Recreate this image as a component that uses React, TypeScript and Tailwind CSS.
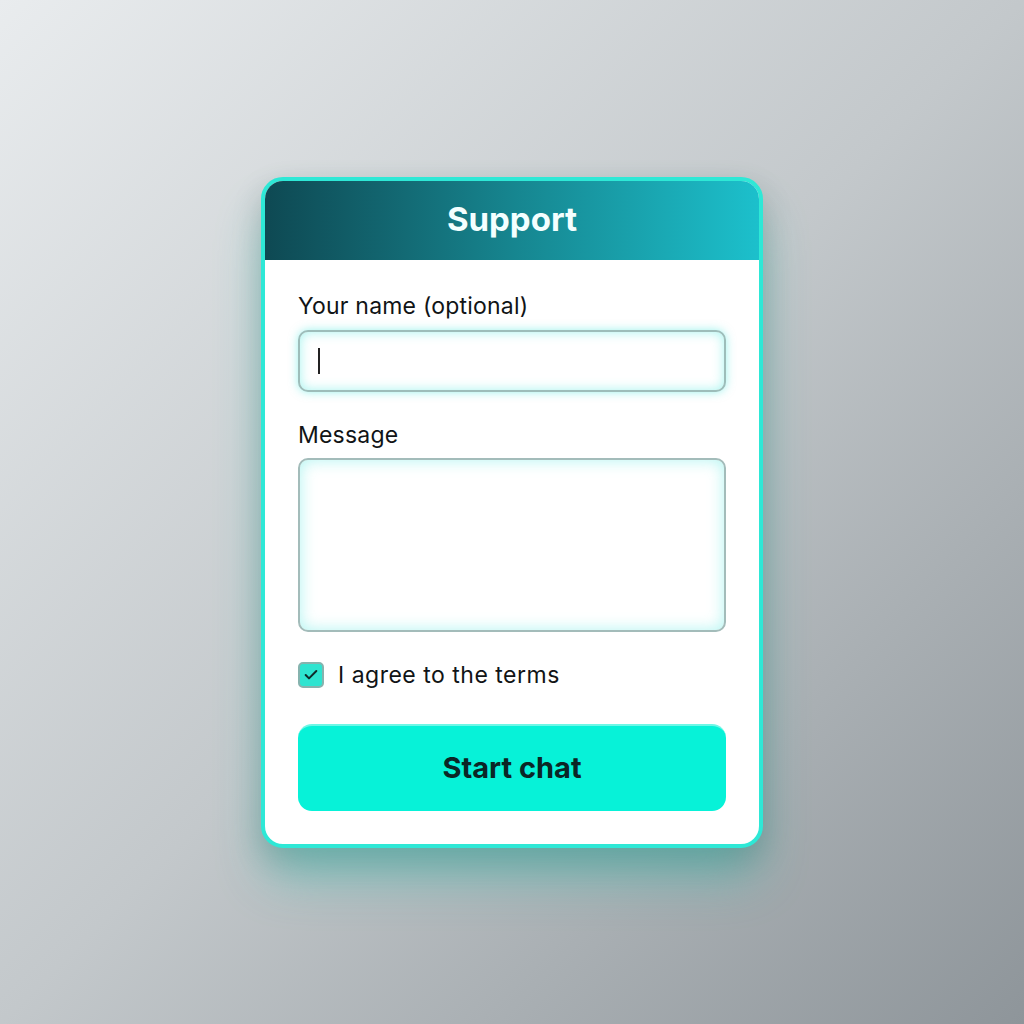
import React, { useState } from "react";
import { Check } from "lucide-react";

const App: React.FC = () => {
  const [agree, setAgree] = useState(true);

  return (
    <div
      className="w-[1024px] h-[1024px] flex items-center justify-center bg-gradient-to-br from-[#e9ecee] via-[#c3c8cb] to-[#8e959a]"
      style={{ fontFamily: "Inter, 'Noto Sans', sans-serif" }}
    >
      <div className="w-[502px] h-[671px] flex flex-col rounded-[22px] border-4 border-[#2ee8d6] bg-white overflow-hidden shadow-[0_34px_50px_-6px_rgba(40,190,175,0.45),0_12px_30px_rgba(0,0,0,0.18)]">
        {/* en-tête */}
        <div className="h-[79px] shrink-0 flex items-center justify-center bg-gradient-to-r from-[#0e4953] via-[#16858f] to-[#1cc0cc]">
          <h1 className="text-[33px] font-bold text-[#f4ffff]">Support</h1>
        </div>

        <div className="flex flex-col px-[33px] pt-[32px]">
          <label className="text-[23px] leading-[28px] tracking-[0.2px] text-[#111416]">Your name (optional)</label>
          <div className="mt-[10px] h-[62px] rounded-[10px] border-2 border-[#9dbdba] bg-white shadow-[inset_0_0_12px_rgba(60,230,220,0.45),0_0_10px_rgba(60,230,220,0.5)] flex items-center pl-[18px]">
            <span className="w-[2px] h-[26px] bg-[#222]" />
          </div>

          <label className="mt-[29px] text-[23px] leading-[28px] tracking-[0.2px] text-[#111416]">Message</label>
          <div className="mt-[9px] h-[174px] rounded-[10px] border-2 border-[#a3bcba] bg-white shadow-[inset_0_0_16px_rgba(60,230,220,0.4)]" />

          <div className="mt-[29px] flex items-center gap-[14px]">
            <button
              onClick={() => setAgree(!agree)}
              className="w-[26px] h-[26px] rounded-[5px] border-2 border-[#86b3ae] bg-[#2ee4d0] flex items-center justify-center"
            >
              {agree && <Check size={16} strokeWidth={3} className="text-[#0f2a2a]" />}
            </button>
            <span className="text-[23px] leading-[28px] tracking-[0.5px] text-[#111416]">I agree to the terms</span>
          </div>

          <button className="mt-[35px] h-[87px] rounded-[14px] bg-[#07f2d8] border-t-2 border-[#6ef7e6] text-[29px] font-bold text-[#0b2626]">
            Start chat
          </button>
        </div>
      </div>
    </div>
  );
};

export default App;
